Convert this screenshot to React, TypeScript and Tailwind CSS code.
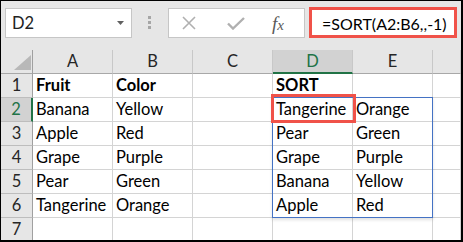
import React from "react";

const cols = ["A", "B", "C", "D", "E", ""];
const data: string[][] = [
  ["Fruit", "Color", "", "SORT", "", ""],
  ["Banana", "Yellow", "", "Tangerine", "Orange", ""],
  ["Apple", "Red", "", "Pear", "Green", ""],
  ["Grape", "Purple", "", "Grape", "Purple", ""],
  ["Pear", "Green", "", "Banana", "Yellow", ""],
  ["Tangerine", "Orange", "", "Apple", "Red", ""],
  ["", "", "", "", "", ""],
];

function ColHeader({ label }: { label: string }) {
  const selected = label === "D";
  return (
    <div
      className={
        selected
          ? "h-[24px] border-r border-r-[#c8c8c8] border-b-2 border-b-[#217346] bg-[#d2d2d2] text-[#217346] text-center leading-[22px]"
          : "h-[24px] border-r border-r-[#c8c8c8] border-b border-b-[#a8a8a8] bg-[#e6e6e6] text-[#262626] text-center leading-[23px]"
      }
    >
      {label}
    </div>
  );
}

function RowHeader({ n }: { n: number }) {
  const selected = n === 2;
  return (
    <div
      className={
        selected
          ? "h-[24px] border-b border-b-[#bdbdbd] border-r-2 border-r-[#217346] bg-[#d2d2d2] text-[#217346] text-center leading-[23px]"
          : "h-[24px] border-b border-b-[#bdbdbd] border-r border-r-[#a0a0a0] bg-[#e6e6e6] text-[#262626] text-center leading-[23px]"
      }
    >
      {n}
    </div>
  );
}

export default function App() {
  return (
    <div className="w-[463px] h-[242px] overflow-hidden border-t border-l border-r-2 border-b-2 border-black bg-[#e6e6e6] flex flex-col font-['Lato',sans-serif] text-[16.5px]">
      {/* formula bar */}
      <div className="h-[49px] shrink-0 flex items-start pt-[6px] pl-[4px]">
        <div className="mt-[1px] w-[127px] h-[30px] border border-[#c6c6c6] bg-white flex items-center justify-between pl-[6px] pr-[7px] text-[#222] leading-[28px]">
          <span>D2</span>
          <svg width="7" height="4" viewBox="0 0 7 4">
            <polygon points="0,0 7,0 3.5,4" fill="#606060" />
          </svg>
        </div>
        <div className="mt-[9px] ml-[16px] flex flex-col gap-[2px]">
          <div className="w-[3px] h-[3px] bg-[#a6a6a6]" />
          <div className="w-[3px] h-[3px] bg-[#a6a6a6]" />
          <div className="w-[3px] h-[3px] bg-[#a6a6a6]" />
        </div>
        <div className="mt-[1px] ml-[17px] w-[137px] h-[30px] border border-[#c6c6c6] bg-white flex items-center pl-[13px]">
          <svg width="14" height="14" viewBox="0 0 14 14">
            <path d="M1 1 L13 13 M13 1 L1 13" stroke="#b0b0b0" strokeWidth="1.6" fill="none" />
          </svg>
          <svg className="ml-[31px]" width="18" height="13" viewBox="0 0 18 13">
            <path d="M1 6.5 L6 11.5 L17 1" stroke="#b0b0b0" strokeWidth="2.4" fill="none" />
          </svg>
          <span className="ml-[27px] text-[#595959] text-[19px] leading-none font-['Liberation_Serif',serif] italic">
            f<span className="text-[15px]">x</span>
          </span>
        </div>
        <div className="ml-[4px] w-[148px] h-[31px] border-[3px] border-[#f05249] bg-white pl-[10px] pt-[2px] text-[16px] leading-[24px] text-black whitespace-nowrap">
          =SORT(A2:B6,,-1)
        </div>
      </div>

      {/* grid */}
      <div className="relative flex-1">
        <div className="grid grid-cols-[32px_80px_80px_80px_80px_80px_1fr]">
          <div className="h-[24px] border-r border-r-[#a0a0a0] border-b border-b-[#a8a8a8] bg-[#e6e6e6] flex items-end justify-end pr-[1px] pb-[3px]">
            <svg width="17" height="15" viewBox="0 0 17 15">
              <polygon points="17,0 17,15 0,15" fill="#b8b8b8" />
            </svg>
          </div>
          {cols.map((c, i) => (
            <ColHeader key={i} label={c} />
          ))}
          {data.map((row, r) => (
            <React.Fragment key={r}>
              <RowHeader n={r + 1} />
              {row.map((v, c) => (
                <div
                  key={c}
                  className={
                    r === 0
                      ? "h-[24px] border-r border-b border-[#d4d4d4] bg-white pl-[3px] leading-[23px] font-bold text-black whitespace-nowrap overflow-visible"
                      : "h-[24px] border-r border-b border-[#d4d4d4] bg-white pl-[3px] leading-[23px] text-black whitespace-nowrap overflow-visible"
                  }
                >
                  {v}
                </div>
              ))}
            </React.Fragment>
          ))}
        </div>

        {/* spill range */}
        <div className="absolute left-[271px] top-[47px] w-[161px] h-[121px] border border-[#4472c4] shadow-[0_2px_3px_rgba(0,0,0,0.12)] pointer-events-none" />
        {/* fill handle */}
        <div className="absolute left-[349px] top-[70px] w-[3px] h-[3px] bg-[#217346]" />
        {/* red highlight around D2 */}
        <div className="absolute left-[270px] top-[44px] w-[85px] h-[29px] border-[3px] border-[#f05249] pointer-events-none" />
      </div>
    </div>
  );
}
